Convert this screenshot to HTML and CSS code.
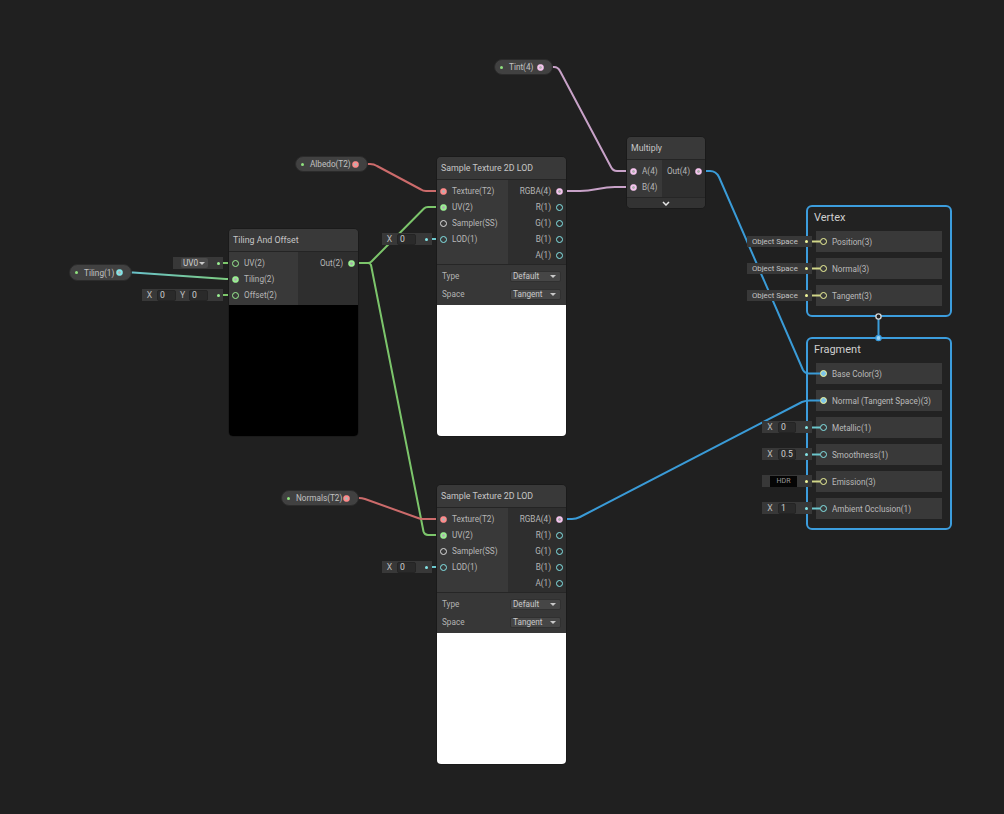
FILE: index.html
```html
<!DOCTYPE html>
<html>
<head>
<meta charset="utf-8">
<title>Shader Graph</title>
<link rel="stylesheet" href="styles.css">
</head>
<body>
<div class="canvas">

  <div class="block b-vertex">
    <div class="block-title">Vertex</div>
    <div class="rows">
      <div class="brow"><span class="dot c3"></span><span class="lbl">Position(3)</span></div>
      <div class="brow"><span class="dot c3"></span><span class="lbl">Normal(3)</span></div>
      <div class="brow"><span class="dot c3"></span><span class="lbl">Tangent(3)</span></div>
    </div>
  </div>

  <div class="block b-fragment">
    <div class="block-title">Fragment</div>
    <div class="rows">
      <div class="brow"><span class="dot c3 linked"></span><span class="lbl">Base Color(3)</span></div>
      <div class="brow"><span class="dot c3 linked"></span><span class="lbl">Normal (Tangent Space)(3)</span></div>
      <div class="brow"><span class="dot c1"></span><span class="lbl">Metallic(1)</span></div>
      <div class="brow"><span class="dot c1"></span><span class="lbl">Smoothness(1)</span></div>
      <div class="brow"><span class="dot c3"></span><span class="lbl">Emission(3)</span></div>
      <div class="brow"><span class="dot c1"></span><span class="lbl">Ambient Occlusion(1)</span></div>
    </div>
  </div>

  <svg class="wires" width="1004" height="814" viewBox="0 0 1004 814">
    <defs>
      <linearGradient id="gTiling" gradientUnits="userSpaceOnUse" x1="125" y1="0" x2="236" y2="0">
        <stop offset="0" stop-color="#68c0cf"/>
        <stop offset="1" stop-color="#7fcd7a"/>
      </linearGradient>
    </defs>
    <path class="w" stroke="url(#gTiling)" d="M119.5 272.5 H133 L226 279 H235.5"/>
    <path class="w red" d="M356.5 164 H370 Q374 164 377 166 L421 189.5 Q423 191 426 191 H443.5"/>
    <path class="w green" d="M351.5 263 H368 Q370 263 371.5 261.5 L424 208.5 Q425.5 207 428 207 H443.5"/>
    <path class="w green" d="M368 263 Q370 263 371 265 L423.5 531.5 Q424.5 535 428 535 H443.5"/>
    <path class="w red" d="M347.5 498 H359 Q362 498 365 499 L418 518 Q420 519 423 519 H443.5"/>
    <path class="w cyan" d="M426 239 H443.5"/>
    <path class="w cyan" d="M426 567 H443.5"/>
    <path class="w green" d="M218 263 H235.5"/>
    <path class="w green" d="M218 295 H235.5"/>
    <path class="w pink" d="M541.5 67 H554 Q558 67 560 71 L611 167 Q613 171 617 171 H633.5"/>
    <path class="w pink" d="M559.5 191 H580 C595 191 600 187 615 187 H633.5"/>
    <path class="w blue" d="M698.5 171 H710 Q716 171 719 177 L803 370 Q805 373.5 809 373.5 H820"/>
    <path class="w blue" d="M559.5 519 H572 Q576 519 580 517 L802 402 Q806 400.5 810 400.5 H820"/>
    <path class="w yellow" d="M806 241.5 H820"/>
    <path class="w yellow" d="M806 268.5 H820"/>
    <path class="w yellow" d="M806 295.5 H820"/>
    <path class="w cyan" d="M806 427.5 H820"/>
    <path class="w cyan" d="M806 454.5 H820"/>
    <path class="w yellow" d="M806 481.5 H820"/>
    <path class="w cyan" d="M806 508.5 H820"/>
    <path class="w blue" d="M878.5 318 V337"/>
    <circle cx="878.5" cy="316.5" r="2.6" fill="#202020" stroke="#d4d4d4" stroke-width="1.4"/>
    <circle cx="878.5" cy="338" r="2.6" fill="#9dd3f2" stroke="#3c9ddd" stroke-width="1.4"/>
  </svg>

  <!-- Tiling And Offset -->
  <div class="node n-tiling">
    <div class="node-title">Tiling And Offset</div>
    <div class="io">
      <div class="inputs">
        <div class="port"><span class="dot c2"></span><span class="lbl">UV(2)</span></div>
        <div class="port"><span class="dot c2 on"></span><span class="lbl">Tiling(2)</span></div>
        <div class="port"><span class="dot c2"></span><span class="lbl">Offset(2)</span></div>
      </div>
      <div class="outputs">
        <div class="port"><span class="lbl">Out(2)</span><span class="dot c2 on"></span></div>
      </div>
    </div>
    <div class="preview black"></div>
  </div>

  <!-- Sample Texture 2D LOD (top) -->
  <div class="node n-tex1">
    <div class="node-title">Sample Texture 2D LOD</div>
    <div class="io">
      <div class="inputs">
        <div class="port"><span class="dot ct on"></span><span class="lbl">Texture(T2)</span></div>
        <div class="port"><span class="dot c2 on"></span><span class="lbl">UV(2)</span></div>
        <div class="port"><span class="dot cs"></span><span class="lbl">Sampler(SS)</span></div>
        <div class="port"><span class="dot c1"></span><span class="lbl">LOD(1)</span></div>
      </div>
      <div class="outputs">
        <div class="port"><span class="lbl">RGBA(4)</span><span class="dot c4 on"></span></div>
        <div class="port"><span class="lbl">R(1)</span><span class="dot c1"></span></div>
        <div class="port"><span class="lbl">G(1)</span><span class="dot c1"></span></div>
        <div class="port"><span class="lbl">B(1)</span><span class="dot c1"></span></div>
        <div class="port"><span class="lbl">A(1)</span><span class="dot c1"></span></div>
      </div>
    </div>
    <div class="settings">
      <div class="setrow"><span>Type</span><span class="dd"><span>Default</span><span class="tri"></span></span></div>
      <div class="setrow"><span>Space</span><span class="dd"><span>Tangent</span><span class="tri"></span></span></div>
    </div>
    <div class="preview white"></div>
  </div>

  <!-- Sample Texture 2D LOD (bottom) -->
  <div class="node n-tex2">
    <div class="node-title">Sample Texture 2D LOD</div>
    <div class="io">
      <div class="inputs">
        <div class="port"><span class="dot ct on"></span><span class="lbl">Texture(T2)</span></div>
        <div class="port"><span class="dot c2 on"></span><span class="lbl">UV(2)</span></div>
        <div class="port"><span class="dot cs"></span><span class="lbl">Sampler(SS)</span></div>
        <div class="port"><span class="dot c1"></span><span class="lbl">LOD(1)</span></div>
      </div>
      <div class="outputs">
        <div class="port"><span class="lbl">RGBA(4)</span><span class="dot c4 on"></span></div>
        <div class="port"><span class="lbl">R(1)</span><span class="dot c1"></span></div>
        <div class="port"><span class="lbl">G(1)</span><span class="dot c1"></span></div>
        <div class="port"><span class="lbl">B(1)</span><span class="dot c1"></span></div>
        <div class="port"><span class="lbl">A(1)</span><span class="dot c1"></span></div>
      </div>
    </div>
    <div class="settings">
      <div class="setrow"><span>Type</span><span class="dd"><span>Default</span><span class="tri"></span></span></div>
      <div class="setrow"><span>Space</span><span class="dd"><span>Tangent</span><span class="tri"></span></span></div>
    </div>
    <div class="preview white"></div>
  </div>

  <!-- Multiply -->
  <div class="node n-mul">
    <div class="node-title">Multiply</div>
    <div class="io">
      <div class="inputs">
        <div class="port"><span class="dot c4 on"></span><span class="lbl">A(4)</span></div>
        <div class="port"><span class="dot c4 on"></span><span class="lbl">B(4)</span></div>
      </div>
      <div class="outputs">
        <div class="port"><span class="lbl">Out(4)</span><span class="dot c4 on"></span></div>
      </div>
    </div>
    <div class="footer">
      <svg width="8" height="5" viewBox="0 0 8 5"><path d="M1 1 L4 4 L7 1" fill="none" stroke="#e6e6e6" stroke-width="1.5"/></svg>
    </div>
  </div>

  <!-- Property pills -->
  <div class="pill p-tiling"><span class="pdot"></span><span class="ptxt">Tiling(1)</span><span class="dot c1 on"></span></div>
  <div class="pill p-albedo"><span class="pdot"></span><span class="ptxt">Albedo(T2)</span><span class="dot ct on"></span></div>
  <div class="pill p-tint"><span class="pdot"></span><span class="ptxt">Tint(4)</span><span class="dot c4 on"></span></div>
  <div class="pill p-normals"><span class="pdot"></span><span class="ptxt">Normals(T2)</span><span class="dot ct on"></span></div>

  <!-- Inline input fields -->
  <div class="fld f-uv0"><span class="mini-dd"><span>UV0</span><span class="tri"></span></span><span class="fdot g"></span></div>
  <div class="fld f-xy"><span class="flab w15">X</span><span class="fbox w19">0</span><span class="flab w13">Y</span><span class="fbox w19">0</span><span class="fdot g"></span></div>
  <div class="fld f-lod1"><span class="flab w15">X</span><span class="fbox w19">0</span><span class="fdot c"></span></div>
  <div class="fld f-lod2"><span class="flab w15">X</span><span class="fbox w19">0</span><span class="fdot c"></span></div>

  <div class="fld f-os f-os1"><span class="ostxt">Object Space</span><span class="fdot y"></span></div>
  <div class="fld f-os f-os2"><span class="ostxt">Object Space</span><span class="fdot y"></span></div>
  <div class="fld f-os f-os3"><span class="ostxt">Object Space</span><span class="fdot y"></span></div>

  <div class="fld f-frag f-met"><span class="flab w16">X</span><span class="fbox w18">0</span><span class="fdot c"></span></div>
  <div class="fld f-frag f-smo"><span class="flab w16">X</span><span class="fbox w18">0.5</span><span class="fdot c"></span></div>
  <div class="fld f-frag f-emi"><span class="hdr">HDR</span><span class="fdot y"></span></div>
  <div class="fld f-frag f-ao"><span class="flab w16">X</span><span class="fbox w18">1</span><span class="fdot c"></span></div>

</div>
</body>
</html>
```

FILE: styles.css
```css
* { box-sizing: border-box; margin: 0; padding: 0; }

html, body {
  width: 1004px;
  height: 814px;
  background: #202020;
  overflow: hidden;
}

body {
  font-family: Roboto, "Liberation Sans", sans-serif;
  color: #c2c2c2;
}

.canvas {
  position: relative;
  width: 1004px;
  height: 814px;
  background: #202020;
}

/* ---------- wires ---------- */
.wires { position: absolute; left: 0; top: 0; }
.w { fill: none; stroke-width: 2; stroke-linejoin: round; stroke-linecap: butt; }
.w.red { stroke: #cc6b6b; }
.w.green { stroke: #7cc56b; }
.w.pink { stroke: #c8a2c8; }
.w.blue { stroke: #3a9bd7; }
.w.cyan { stroke: #6cc6cc; }
.w.yellow { stroke: #d0d588; }

/* ---------- port dots ---------- */
.dot {
  width: 7px;
  height: 7px;
  border-radius: 50%;
  border: 1.5px solid currentColor;
  flex: none;
}
.dot.on {
  background: radial-gradient(circle, rgba(255,255,255,0.6) 0 1px, currentColor 1.7px);
}
.dot.linked {
  background: #7cc4e8;
}
.c1 { color: #84e4e7; }
.c2 { color: #9aef92; }
.c3 { color: #f0f59a; }
.c4 { color: #f5c4ee; }
.ct { color: #ff8b8b; }
.cs { color: #dcdcdc; }

/* ---------- nodes ---------- */
.node {
  position: absolute;
  display: flex;
  flex-direction: column;
  background: #2e2e2e;
  border: 1px solid #1a1a1a;
  border-radius: 5px;
  overflow: hidden;
}

.n-tiling { left: 228px; top: 228px; width: 131px; }
.n-tex1 { left: 436px; top: 156px; width: 131px; }
.n-tex2 { left: 436px; top: 484px; width: 131px; }
.n-mul { left: 626px; top: 136px; width: 80px; }

.node-title {
  height: 23px;
  line-height: 22px;
  padding-left: 4px;
  font-size: 8.8px;
  color: #c6c6c6;
  background: #393939;
  border-bottom: 1px solid #242424;
  white-space: nowrap;
}

.io { display: flex; }

.inputs {
  background: #393939;
  padding: 3px 0 2px;
}
.n-tiling .inputs { width: 69px; }
.n-tex1 .inputs, .n-tex2 .inputs { width: 71px; padding-bottom: 1px; }
.n-tex1 .outputs, .n-tex2 .outputs { padding-bottom: 1px; }
.n-mul .inputs { width: 35px; }

.outputs {
  flex: 1;
  background: #2e2e2e;
  padding: 3px 0 2px;
}

.port {
  height: 16px;
  display: flex;
  align-items: center;
  font-size: 8.2px;
  color: #b6b6b6;
  white-space: nowrap;
}
.inputs .port { padding-left: 3px; }
.inputs .port .lbl { margin-left: 5px; }
.outputs .port { justify-content: flex-end; padding-right: 3px; }
.outputs .port .lbl { margin-right: 5px; }

.settings {
  background: #373737;
  border-top: 1px solid #262626;
  padding: 2px 5px;
}
.setrow {
  height: 18px;
  display: flex;
  align-items: center;
  justify-content: space-between;
  font-size: 8.2px;
  color: #b3b3b3;
}
.dd {
  width: 51px;
  height: 11px;
  background: #464646;
  border: 1px solid #303030;
  border-radius: 2px;
  display: flex;
  align-items: center;
  justify-content: space-between;
  padding: 0 4px 0 2px;
  font-size: 8.2px;
  color: #c9c9c9;
}
.tri {
  width: 0;
  height: 0;
  border-left: 3px solid transparent;
  border-right: 3px solid transparent;
  border-top: 3px solid #c9c9c9;
  flex: none;
}

.preview { height: 131px; }
.preview.white { background: #ffffff; }
.preview.black { background: #000000; }

.footer {
  height: 11px;
  background: #333333;
  border-top: 1px solid #262626;
  display: flex;
  align-items: center;
  justify-content: center;
}

/* ---------- blocks ---------- */
.block {
  position: absolute;
  left: 806px;
  width: 146px;
  background: #222222;
  border: 2px solid #3c9ddd;
  border-radius: 6px;
  padding: 0 8px 9px;
}
.b-vertex { top: 205px; }
.b-fragment { top: 337px; }

.block-title {
  height: 24px;
  line-height: 22px;
  margin-left: -2px;
  font-size: 11px;
  color: #cfcfcf;
}
.rows {
  display: flex;
  flex-direction: column;
  gap: 6px;
}
.brow {
  height: 21px;
  background: #393939;
  display: flex;
  align-items: center;
  padding-left: 4px;
  font-size: 8.2px;
  color: #bababa;
  white-space: nowrap;
}
.brow .lbl { margin-left: 5px; }

/* ---------- property pills ---------- */
.pill {
  position: absolute;
  height: 17px;
  display: flex;
  align-items: center;
  padding: 0 8px 0 5px;
  background: #414141;
  border: 1px solid #2b2b2b;
  border-radius: 9px;
  font-size: 8.2px;
  color: #c2c2c2;
  white-space: nowrap;
}
.pill .dot { margin-left: auto; }
.pdot {
  width: 3px;
  height: 3px;
  border-radius: 50%;
  background: #8fe27e;
  flex: none;
}
.ptxt { margin-left: 6px; }

.p-tiling { left: 69px; top: 264px; width: 63px; }
.p-albedo { left: 295px; top: 156px; width: 73px; height: 16px; }
.p-tint { left: 494px; top: 59px; width: 59px; height: 16px; }
.p-normals { left: 281px; top: 490px; width: 78px; height: 16px; }

/* ---------- inline fields ---------- */
.fld {
  position: absolute;
  height: 12px;
  display: flex;
  align-items: center;
  background: #383838;
  font-size: 8.6px;
  color: #c6c6c6;
  white-space: nowrap;
}
.fdot {
  width: 3px;
  height: 3px;
  border-radius: 50%;
  margin-left: auto;
  margin-right: 4.5px;
  flex: none;
}
.fdot.g { background: #9aef92; }
.fdot.c { background: #84e4e7; }
.fdot.y { background: #f0f59a; }

.flab { text-align: center; flex: none; color: #bdbdbd; }
.fbox {
  height: 11px;
  line-height: 9px;
  padding-left: 2px;
  background: #2a2a2a;
  border: 1px solid #242424;
  border-radius: 2px;
  flex: none;
  color: #d0d0d0;
}
.w13 { width: 13px; }
.w15 { width: 15px; }
.w16 { width: 16px; }
.w18 { width: 18px; }
.w19 { width: 19px; }

.mini-dd {
  width: 27px;
  height: 10px;
  margin-left: 8px;
  background: #4a4a4a;
  border-radius: 2px;
  display: flex;
  align-items: center;
  justify-content: space-between;
  padding: 0 3px 0 2px;
  color: #d0d0d0;
  font-size: 8.2px;
}

.f-uv0 { left: 173px; top: 257px; width: 50px; }
.f-uv0 .fdot { margin-right: 3.5px; }
.f-xy { left: 142px; top: 289px; width: 81px; }
.f-xy .fdot { margin-right: 3.5px; }
.f-lod1 { left: 382px; top: 233px; width: 50px; }
.f-lod2 { left: 382px; top: 561px; width: 50px; }

.f-os {
  left: 747px;
  width: 65px;
  height: 11px;
  font-size: 7.8px;
}
.ostxt { margin-left: 5px; color: #c3c3c3; }
.f-os1 { top: 236px; }
.f-os2 { top: 263px; }
.f-os3 { top: 290px; }

.f-frag { left: 762px; width: 50px; }
.f-met { top: 421px; }
.f-smo { top: 448px; }
.f-emi { top: 475px; }
.f-ao { top: 502px; }

.hdr {
  width: 27px;
  height: 11px;
  margin-left: 8px;
  background: #050505;
  color: #9a9a9a;
  font-size: 7px;
  line-height: 11px;
  text-align: center;
  flex: none;
}
```
